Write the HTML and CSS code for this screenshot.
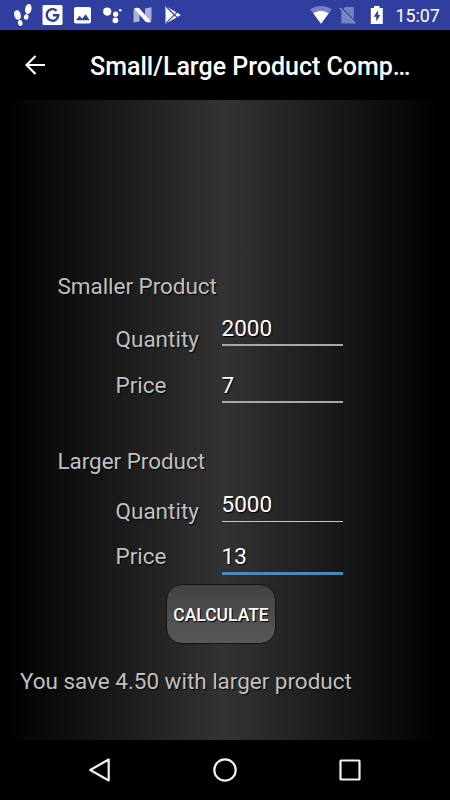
FILE: index.html
```html
<!DOCTYPE html>
<html lang="en">
<head>
<meta charset="utf-8">
<title>Small/Large Product Comparison</title>
<link rel="stylesheet" href="styles.css">
</head>
<body>
<header class="status">
  <svg class="status-icons" width="200" height="30" viewBox="0 0 200 30" fill="#fff">
    <g>
      <ellipse cx="17.500" cy="15" rx="3.200" ry="4.800" transform="rotate(-14 17.500 15)"/>
      <ellipse cx="20.200" cy="23" rx="2.300" ry="2.900" transform="rotate(-14 20.200 23)"/>
      <ellipse cx="28.300" cy="9" rx="3.200" ry="5" transform="rotate(12 28.300 9)"/>
      <ellipse cx="26.200" cy="17" rx="2.300" ry="2.800" transform="rotate(12 26.200 17)"/>
    </g>
    <rect x="42.500" y="5" width="20" height="20" rx="1.500"/>
    <path d="M56.600 10.800A5.800 5.800 0 1 0 58.300 15.200H52.800" fill="none" stroke="#303f9f" stroke-width="2.400"/>
    <rect x="74" y="7" width="17" height="16.500" rx="2"/>
    <path d="M76 20.300l3.600-4.600 2.600 3 3.400-4.400 4.200 6z" fill="#303f9f"/>
    <circle cx="107.200" cy="11.600" r="4.100"/>
    <circle cx="115.600" cy="14.200" r="2.600"/>
    <circle cx="120.200" cy="10.200" r="1.300"/>
    <circle cx="115.400" cy="20.300" r="2.900"/>
    <path d="M133.500 9.500l6-1.500v13.500l-6 1zM145 8.500l6.500-1.200v13l-6.500 1.500z" opacity=".6"/>
    <path d="M134 8.300q3.500-1.500 6 .7l11.400 13q-4 1.200-6.500-.9z"/>
    <path d="M165.500 6l15.400 8.900-15.400 8.800z"/>
    <path d="M166 6.500l11.200 11M166 23.200l11.200-11" fill="none" stroke="#303f9f" stroke-width="1.100"/>
  </svg>
  <div class="status-right">
    <svg width="76" height="30" viewBox="310 0 76 30" fill="#fff">
      <path d="M310 9.300q11-6.500 22 0l-11 14.500z" opacity=".35"/>
      <path d="M313.300 13.200q7.700-5 15.400 0L321 23.800z"/>
      <path d="M345 7h8.800v16.400h-12.500V10.700z" opacity=".35"/>
      <path d="M340.600 7.300l15.500 15.400" stroke="#303f9f" stroke-width="1.500"/>
      <path d="M339.800 8l15.600 15.500" stroke="#8c95cb" stroke-width="1.300"/>
      <path d="M374 6h5.500v2h3.300v16h-12V8h3.200z"/>
      <path d="M378 10.300l-4.200 6.400h2.500v4.700l4-6.500h-2.300z" fill="#303f9f"/>
    </svg>
    <span class="clock">15:07</span>
  </div>
</header>

<div class="appbar">
  <svg class="back" width="20" height="20" viewBox="0 0 20 20" fill="none" stroke="#fff" stroke-width="2.200">
    <path d="M20 10H2M10.500 1L1.500 10l9 9"/>
  </svg>
  <h1 class="title">Small/Large Product Comp…</h1>
</div>

<main class="content">
  <section class="group">
    <h2 class="heading">Smaller Product</h2>
    <div class="row row-offset-large">
      <span class="label">Quantity</span>
      <span class="field">2000</span>
    </div>
    <div class="row">
      <span class="label">Price</span>
      <span class="field">7</span>
    </div>
  </section>
  <section class="group group-larger">
    <h2 class="heading">Larger Product</h2>
    <div class="row row-offset-small">
      <span class="label">Quantity</span>
      <span class="field field-thin">5000</span>
    </div>
    <div class="row">
      <span class="label">Price</span>
      <span class="field field-active">13</span>
    </div>
  </section>
  <button class="calculate" type="button">CALCULATE</button>
  <p class="result">You save 4.50 with larger product</p>
</main>

<nav class="navbar">
  <svg width="26" height="26" viewBox="0 0 26 26"><path d="M21.700 2.500v21L3.200 13z"/></svg>
  <svg width="26" height="26" viewBox="0 0 26 26"><circle cx="13" cy="13" r="10.700"/></svg>
  <svg width="26" height="26" viewBox="0 0 26 26"><rect x="3.500" y="3.500" width="19" height="19" rx=".5"/></svg>
</nav>
</body>
</html>
```
FILE: styles.css
```css
* {
  box-sizing: border-box;
}

body {
  margin: 0;
  width: 450px;
  height: 800px;
  display: flex;
  flex-direction: column;
  overflow: hidden;
  background: #000;
  color: #c0c0c0;
  font-family: Roboto, sans-serif;
  font-size: 22.5px;
  line-height: 26px;
}

.status {
  height: 30px;
  display: flex;
  justify-content: space-between;
  background: #303f9f;
}

.status-right {
  display: flex;
  width: 140px;
}

.clock {
  margin-left: 9.5px;
  color: #fff;
  font-size: 17.8px;
  line-height: 31px;
}

.appbar {
  height: 70px;
  display: flex;
  align-items: center;
  padding: 0 30px 0 25px;
}

.back {
  flex: none;
}

.title {
  margin: 3px 0 0 45px;
  white-space: nowrap;
  color: #fff;
  font-size: 25px;
  font-weight: 500;
  line-height: 32px;
}

.content {
  height: 640px;
  padding-top: 173px;
  background: linear-gradient(90deg, #000 1%, #333 50%, #000 98%);
}

.group {
  padding-left: 57.5px;
}

.group-larger {
  margin-top: 45px;
}

.heading {
  margin: 0 0 16px;
  font-size: inherit;
  font-weight: 400;
  letter-spacing: -0.05px;
  text-shadow: 1px 1px 1px #000;
}

.group-larger .heading {
  margin-bottom: 17px;
}

.row {
  display: flex;
  align-items: flex-start;
  height: 31px;
  padding-left: 58px;
}

.row + .row {
  margin-top: 26px;
}

.group-larger .row + .row {
  margin-top: 21px;
}

.label {
  width: 106px;
  text-shadow: 1px 1px 1px #000;
}

.row-offset-large .label {
  padding-top: 11px;
}

.row-offset-small .label {
  padding-top: 7px;
}

.field {
  width: 121.5px;
  height: 31px;
  border-bottom: 2px solid #aaa7aa;
  color: #fff;
  text-shadow: 1px 1px 1px #000;
}

.field-thin {
  border-bottom: 1px solid #c8c4c8;
}

.field-active {
  height: 32px;
  border-bottom: 3px solid #4a88bf;
}

.calculate {
  display: block;
  width: 110px;
  height: 60px;
  margin: 10px 0 0 166px;
  padding: 0;
  border: 1px solid #151515;
  border-radius: 16px;
  background: linear-gradient(#424242, #585858);
  color: #fff;
  font: 500 17.5px/60px Roboto, sans-serif;
  text-shadow: 1px 1px 1px #000;
}

.result {
  margin: 24px 0 0 20px;
  letter-spacing: -0.03px;
  text-shadow: 1px 1px 1px #000;
}

.navbar {
  height: 60px;
  display: flex;
  justify-content: space-between;
  align-items: center;
  padding: 0 87px;
}

.navbar svg {
  fill: none;
  stroke: #f0f0f0;
  stroke-width: 2.2;
  stroke-linejoin: round;
}
```
